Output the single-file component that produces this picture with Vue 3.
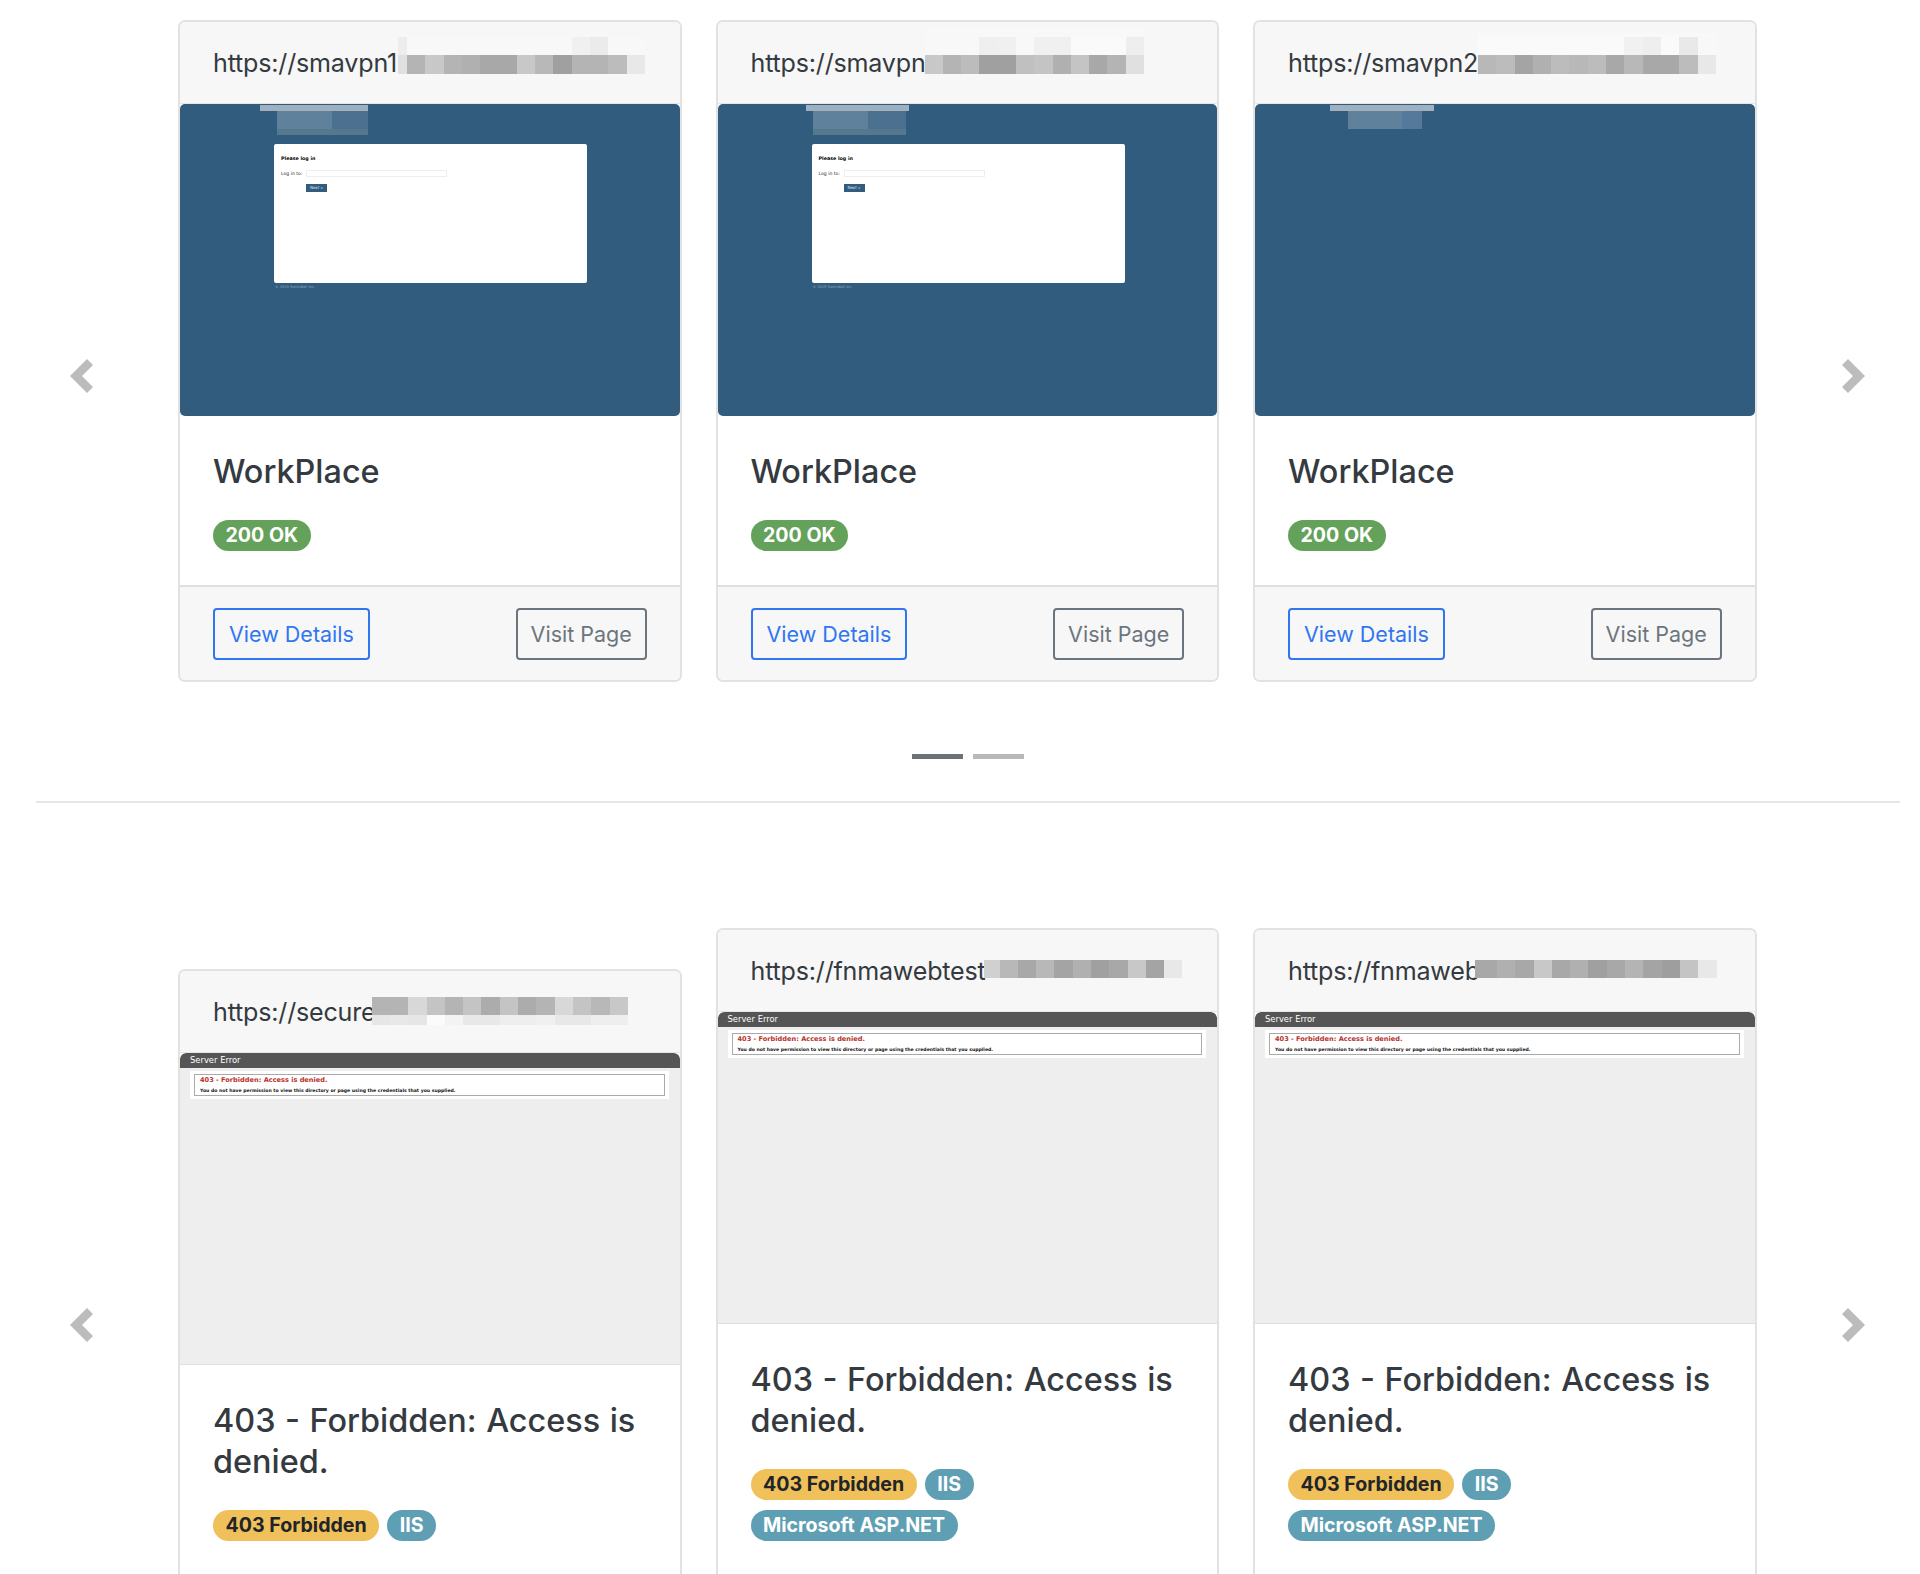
<script setup>
const g = (v) => `rgb(${v},${v},${v})`
const row = (h, first, vals) => ({
  h,
  cells: vals.map((v, i) => ({ w: i === 0 ? first : 18.3, c: v === 0 ? 'transparent' : g(v) })),
})

const loginShot = { type: 'login', stripLeft: 80, stripWidth: 108, blockLeft: 97, lightWidth: 55, darkWidth: 36, showLogin: true }
const loginShot2 = { type: 'login', stripLeft: 88, stripWidth: 103, blockLeft: 95, lightWidth: 55, darkWidth: 38, showLogin: true }
const loginShot3 = { type: 'login', stripLeft: 75, stripWidth: 104, blockLeft: 93, lightWidth: 54, darkWidth: 20, showLogin: false }
const errorShot = { type: 'error' }

const first = [
  {
    url: 'https://smavpn1', shot: loginShot, title: 'WorkPlace',
    badges: [{ t: '200 OK', k: 'ok' }],
    mosaic: { left: 218, top: 15, rows: [
      row(18, 9, [237, 248, 248, 248, 248, 248, 248, 248, 248, 248, 240, 235, 248, 248]),
      row(19, 9, [224, 180, 200, 180, 176, 168, 168, 200, 184, 160, 180, 180, 188, 232]),
    ] },
  },
  {
    url: 'https://smavpn', shot: loginShot2, title: 'WorkPlace',
    badges: [{ t: '200 OK', k: 'ok' }],
    mosaic: { left: 207, top: 5, rows: [
      row(10, 18.3, [248, 248, 248, 248, 248, 248, 248, 248, 248, 248, 248, 248]),
      row(18, 18.3, [248, 248, 248, 239, 240, 248, 240, 240, 250, 250, 250, 238]),
      row(19, 18.3, [200, 180, 188, 160, 160, 192, 196, 176, 196, 168, 180, 224]),
    ] },
  },
  {
    url: 'https://smavpn2', shot: loginShot3, title: 'WorkPlace',
    badges: [{ t: '200 OK', k: 'ok' }],
    mosaic: { left: 223, top: 11, rows: [
      row(4, 18.3, [249, 249, 249, 249, 249, 249, 249, 249, 249, 249, 249, 249, 249]),
      row(18, 18.3, [250, 250, 250, 250, 250, 250, 250, 250, 241, 238, 250, 233, 248]),
      row(19, 18.3, [184, 188, 164, 176, 188, 184, 188, 168, 184, 168, 168, 188, 232]),
    ] },
  },
]

const forbidden = '403 - Forbidden: Access is denied.'
const second = [
  {
    url: 'https://secure', shot: errorShot, title: forbidden,
    badges: [{ t: '403 Forbidden', k: 'warn' }, { t: 'IIS', k: 'info' }],
    mosaic: { left: 192, top: 26, rows: [
      row(18, 18, [180, 180, 216, 196, 180, 196, 172, 196, 172, 180, 216, 196, 184, 200]),
      row(10, 18, [230, 232, 230, 251, 243, 232, 232, 238, 238, 240, 232, 232, 238, 238]),
    ] },
  },
  {
    url: 'https://fnmawebtest', shot: errorShot, title: forbidden,
    badges: [{ t: '403 Forbidden', k: 'warn' }, { t: 'IIS', k: 'info' }, { t: 'Microsoft ASP.NET', k: 'info' }],
    mosaic: { left: 266, top: 30, rows: [
      row(18, 16, [208, 184, 168, 184, 164, 176, 160, 168, 200, 164, 232]),
    ] },
  },
  {
    url: 'https://fnmaweb', shot: errorShot, title: forbidden,
    badges: [{ t: '403 Forbidden', k: 'warn' }, { t: 'IIS', k: 'info' }, { t: 'Microsoft ASP.NET', k: 'info' }],
    mosaic: { left: 220, top: 30, rows: [
      row(18, 22, [168, 176, 168, 200, 168, 176, 160, 168, 180, 164, 158, 196, 232]),
    ] },
  },
]

const sections = [
  { id: 'a', cards: first, cls: 'first', dots: true },
  { id: 'b', cards: second, cls: 'second', dots: false },
]
</script>

<template>
  <div class="page">
    <section v-for="s in sections" :key="s.id" class="carousel" :class="s.cls">
      <div class="slide">
        <div class="arrow-cell left">
          <svg width="24" height="36" viewBox="0 0 24 36"><polygon points="17,1 23,7 12,18 23,29 17,35 0,18" fill="#bbbcbe" /></svg>
        </div>
        <div class="cards">
          <article v-for="c in s.cards" :key="c.url" class="card">
            <header class="card-head">
              <span class="url">{{ c.url }}</span>
              <div class="mosaic" :style="{ left: c.mosaic.left + 'px', top: c.mosaic.top + 'px' }">
                <div v-for="(r, ri) in c.mosaic.rows" :key="ri" class="mrow" :style="{ height: r.h + 'px' }">
                  <i v-for="(cell, ci) in r.cells" :key="ci" :style="{ width: cell.w + 'px', background: cell.c }"></i>
                </div>
              </div>
            </header>

            <div v-if="c.shot.type === 'login'" class="shot login">
              <div class="smudge strip" :style="{ marginLeft: c.shot.stripLeft + 'px', width: c.shot.stripWidth + 'px' }"></div>
              <div class="smudge-row" :style="{ marginLeft: c.shot.blockLeft + 'px' }">
                <div class="smudge light" :style="{ width: c.shot.lightWidth + 'px' }"></div>
                <div class="smudge dark" :class="{ pale: !c.shot.showLogin }" :style="{ width: c.shot.darkWidth + 'px' }"></div>
              </div>
              <template v-if="c.shot.showLogin">
                <div class="smudge lower" :style="{ marginLeft: c.shot.blockLeft + 'px', width: c.shot.lightWidth + c.shot.darkWidth + 'px' }"></div>
                <div class="login-box">
                  <div class="lb-title">Please log in</div>
                  <div class="lb-row"><span>Log in to:</span><i class="lb-input"></i></div>
                  <div class="lb-btn">Next »</div>
                </div>
                <div class="lb-foot">© 2019 SonicWall Inc.</div>
              </template>
            </div>

            <div v-else class="shot error">
              <div class="err-bar">Server Error</div>
              <div class="err-outer">
                <div class="err-inner">
                  <div class="err-h">403 - Forbidden: Access is denied.</div>
                  <div class="err-p">You do not have permission to view this directory or page using the credentials that you supplied.</div>
                </div>
              </div>
            </div>

            <div class="card-body">
              <h4 class="title">{{ c.title }}</h4>
              <div class="badges">
                <span v-for="b in c.badges" :key="b.t" class="badge" :class="b.k">{{ b.t }}</span>
              </div>
            </div>
            <footer class="card-foot">
              <a class="btn primary">View Details</a>
              <a class="btn secondary">Visit Page</a>
            </footer>
          </article>
        </div>
        <div class="arrow-cell right">
          <svg width="24" height="36" viewBox="0 0 24 36"><polygon points="7,1 1,7 12,18 1,29 7,35 24,18" fill="#bbbcbe" /></svg>
        </div>
      </div>
      <div v-if="s.dots" class="dots"><i class="on"></i><i></i></div>
      <hr v-if="s.dots" class="rule" />
    </section>
  </div>
</template>

<style scoped>
.page {
  height: 1574px;
  overflow: hidden;
  box-sizing: border-box;
  padding: 0 20px 0 36px;
  font-family: Inter, "Liberation Sans", sans-serif;
  color: #343a40;
  background: #fff;
}
.carousel.first { padding-top: 20px; }
.carousel.second { padding-top: 125px; }
.slide {
  display: grid;
  grid-template-columns: 142px 1fr 142px;
  padding-bottom: 50px;
}
.arrow-cell {
  display: flex;
  align-items: center;
  justify-content: center;
  margin-bottom: -50px;
}
.arrow-cell.left { padding-right: 50px; }
.arrow-cell.right { padding-left: 48px; }
.cards {
  display: grid;
  grid-template-columns: repeat(3, 503.5px);
  column-gap: 34px;
  align-items: end;
}
.card {
  border: 2px solid #e2e2e2;
  border-radius: 7px;
  background: #fff;
  overflow: hidden;
}
.card-head {
  position: relative;
  height: 82px;
  box-sizing: border-box;
  padding: 0 33px;
  display: flex;
  align-items: center;
  background: #f7f7f7;
  border-bottom: 1px solid #e6e6e6;
}
.url {
  font-size: 25.1px;
  letter-spacing: -0.2px;
  color: #343a40;
  white-space: nowrap;
}
.mosaic {
  position: absolute;
  display: flex;
  flex-direction: column;
}
.mrow { display: flex; }
.mrow i { display: block; flex: none; height: 100%; }

.shot {
  height: 312px;
  border-radius: 5px;
  overflow: hidden;
  box-sizing: border-box;
}
.login {
  background: #325c7e;
  padding-top: 1px;
  position: relative;
}
.smudge { height: 6px; }
.smudge.strip { background: #9fb1c0; }
.smudge-row { display: flex; }
.smudge.light { height: 18px; background: #60819c; }
.smudge.dark { height: 18px; background: #4c7190; }
.smudge.dark.pale { background: #55799a; }
.smudge.lower { height: 6px; background: #55788f; }
.login-box {
  margin: 9px 0 0 94px;
  width: 313px;
  height: 139px;
  box-sizing: border-box;
  background: #fff;
  border-radius: 2px;
  padding: 11px 7px;
  font-family: "DejaVu Sans", sans-serif;
  color: #222;
  font-size: 4.6px;
}
.lb-title { font-weight: 700; font-size: 4.8px; line-height: 7px; color: #000; }
.lb-row {
  display: flex;
  align-items: center;
  gap: 4px;
  margin-top: 8px;
  height: 7px;
}
.lb-input {
  display: block;
  width: 141px;
  height: 7px;
  box-sizing: border-box;
  border: 1px solid #eee;
}
.lb-btn {
  margin: 7px 0 0 25px;
  width: 21px;
  height: 8px;
  background: #325c7e;
  color: #dfe7ee;
  font-size: 4px;
  line-height: 8px;
  text-align: center;
}
.lb-foot {
  margin: 2px 0 0 95px;
  font-family: "DejaVu Sans", sans-serif;
  font-size: 3.6px;
  color: #8fa6b9;
}
.error {
  background: #eee;
  border-radius: 6px 6px 0 0;
  border-bottom: 1px solid #e0e0e0;
}
.err-bar {
  height: 15px;
  background: #555;
  color: #fff;
  font-family: "DejaVu Sans", sans-serif;
  font-size: 8.4px;
  line-height: 15px;
  padding-left: 10px;
  border-radius: 6px 6px 0 0;
}
.err-outer {
  margin: 3px 11px 0 10px;
  background: #fff;
  padding: 3px 4px;
  height: 28px;
  box-sizing: border-box;
}
.err-inner {
  height: 22px;
  box-sizing: border-box;
  border: 1px solid #aaa;
  padding: 1px 5px;
  font-family: "DejaVu Sans", sans-serif;
  white-space: nowrap;
}
.err-h { color: #b8322c; font-weight: 700; font-size: 6.6px; line-height: 9px; }
.err-p { color: #111; font-weight: 700; font-size: 4.6px; line-height: 7px; margin-top: 2px; }

.card-body {
  padding: 36px 33px 34px;
}
.title {
  margin: 0 0 28px;
  font-size: 32.4px;
  line-height: 40.4px;
  font-weight: 500;
  word-spacing: 0.9px;
  color: #343a40;
}
.badges {
  display: flex;
  flex-wrap: wrap;
  gap: 10px 8px;
}
.badge {
  height: 31px;
  box-sizing: border-box;
  padding: 0 12.5px;
  border-radius: 16px;
  font-size: 19.6px;
  font-weight: 700;
  line-height: 31px;
  white-space: nowrap;
}
.badge.ok { background: #64a15a; color: #fff; }
.badge.warn { background: #f0c15a; color: #212529; }
.badge.info { background: #5f9fb4; color: #fff; }

.card-foot {
  height: 95px;
  box-sizing: border-box;
  padding: 0 33px;
  display: flex;
  align-items: center;
  justify-content: space-between;
  background: #f7f7f7;
  border-top: 2px solid #dedede;
}
.btn {
  height: 52px;
  box-sizing: border-box;
  padding: 0 14px;
  display: flex;
  align-items: center;
  border-radius: 4px;
  border: 2px solid;
  font-size: 21.5px;
}
.btn.primary { color: #3076f0; border-color: #3076f0; }
.btn.secondary { color: #6c757d; border-color: #6c757d; padding: 0 12.7px; }

.dots {
  display: flex;
  justify-content: center;
  gap: 10px;
  margin-top: 22px;
}
.dots i {
  display: block;
  width: 51px;
  height: 5px;
  background: #b9b9bc;
}
.dots i.on { background: #6c7175; }
.rule {
  border: 0;
  height: 2px;
  margin: 42px 0 0;
  background: #e6e6e6;
}
</style>

<style>
html, body { margin: 0; background: #fff; }
</style>
